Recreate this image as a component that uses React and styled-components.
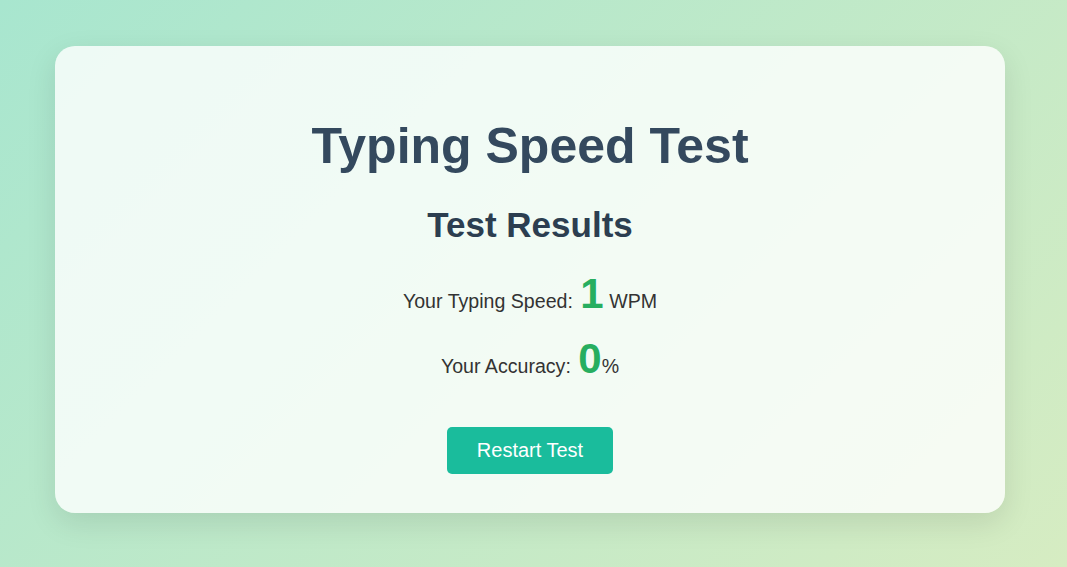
import styled, { createGlobalStyle } from "styled-components";

const GlobalStyle = createGlobalStyle`
  html, body {
    margin: 0;
    padding: 0;
  }
  body {
    font-family: "Liberation Sans", Arial, sans-serif;
    background: linear-gradient(135deg, #a8e6cf 0%, #d6ecc2 100%);
    min-height: 567px;
  }
`;

const Page = styled.div`
  min-height: 567px;
  box-sizing: border-box;
  padding: 46px 62px 55px 55px;
`;

const Card = styled.div`
  width: 950px;
  box-sizing: border-box;
  padding: 40px 40px 39px;
  border-radius: 20px;
  background: rgba(255, 255, 255, 0.8);
  box-shadow: 0 10px 30px rgba(0, 0, 0, 0.1);
  text-align: center;
`;

const Title = styled.h1`
  font-size: 50px;
  font-weight: bold;
  color: #34495e;
  margin: 31px 0 0;
`;

const Subtitle = styled.h2`
  font-size: 35px;
  font-weight: bold;
  color: #2c3e50;
  margin: 30px 0 25px;
`;

const Stat = styled.p`
  font-size: 19.6px;
  color: #333;
  margin: 0 0 ${(p) => (p.$last ? 0 : 17)}px;
`;

const Value = styled.span`
  font-size: 42px;
  font-weight: bold;
  color: #27ae60;
  margin-left: 2px;
`;

const Actions = styled.div`
  margin-top: 44px;
`;

const Button = styled.button`
  font-family: inherit;
  font-size: 20px;
  color: #fff;
  background: #1abc9c;
  border: none;
  border-radius: 5px;
  padding: 12px 30px;
  line-height: 23px;
  cursor: pointer;
`;

export default function App() {
  return (
    <>
      <GlobalStyle />
      <Page>
        <Card>
          <Title>Typing Speed Test</Title>
          <Subtitle>Test Results</Subtitle>
          <Stat>
            Your Typing Speed: <Value>1</Value> WPM
          </Stat>
          <Stat $last>
            Your Accuracy: <Value>0</Value>%
          </Stat>
          <Actions>
            <Button>Restart Test</Button>
          </Actions>
        </Card>
      </Page>
    </>
  );
}
